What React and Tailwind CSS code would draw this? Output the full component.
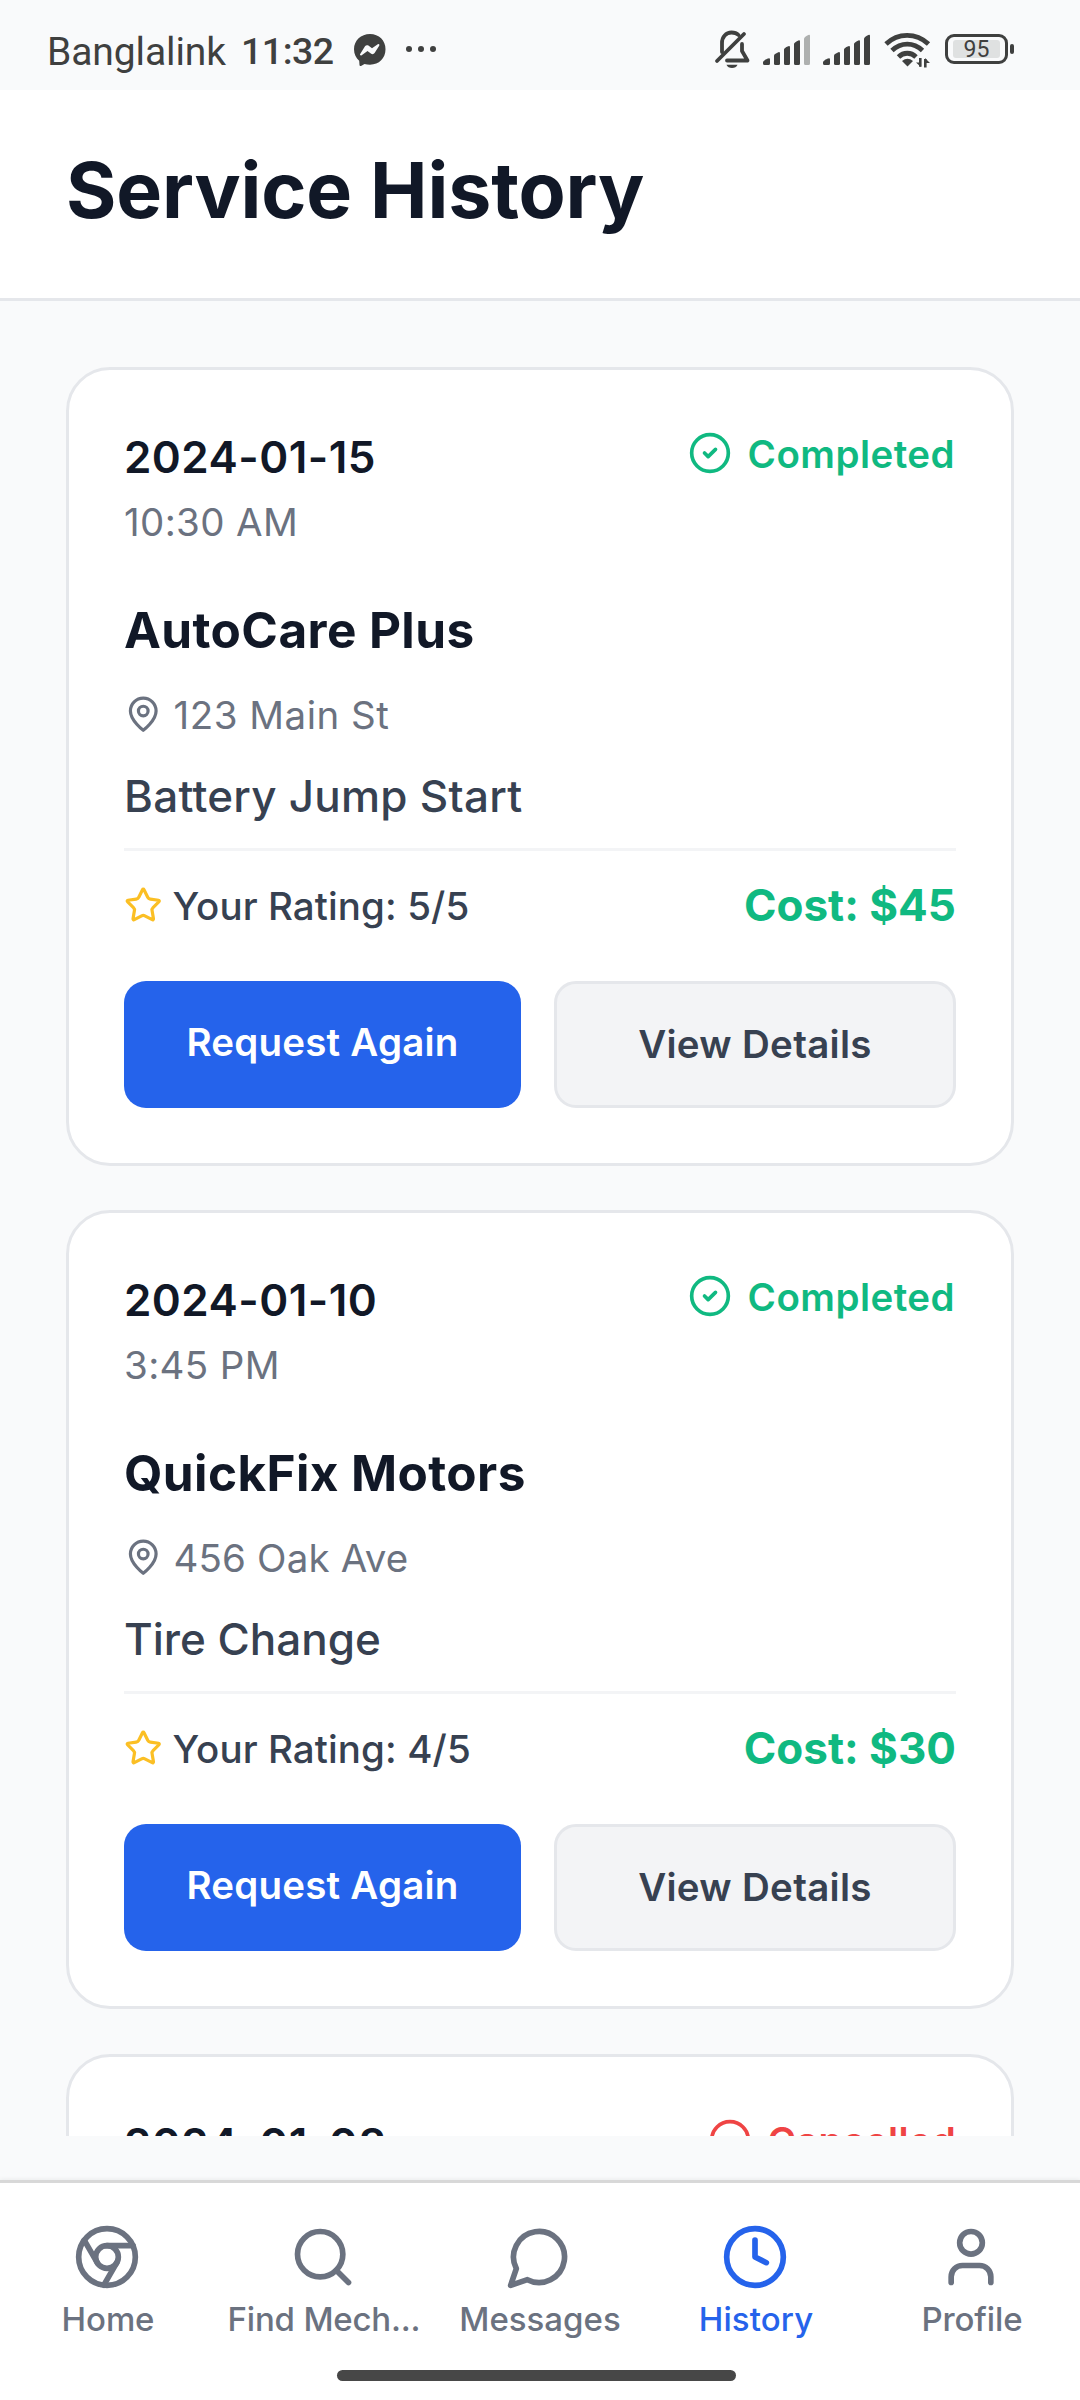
import { Search, Clock, User, Star, CircleCheck, Circle } from "lucide-react";

const services = [
  { date: "2024-01-15", time: "10:30 AM", status: "Completed", name: "AutoCare Plus", address: "123 Main St", addressClass: "tracking-[0.5px]", service: "Battery Jump Start", serviceClass: "tracking-[0.25px]", rating: "5/5", cost: "$45" },
  { date: "2024-01-10", time: "3:45 PM", status: "Completed", name: "QuickFix Motors", address: "456 Oak Ave", addressClass: "tracking-[0.15px]", service: "Tire Change", serviceClass: "tracking-normal", rating: "4/5", cost: "$30" },
  { date: "2024-01-08", status: "Cancelled" },
];

function Outline({ className, children }) {
  return (
    <svg className={className} viewBox="0 0 24 24" fill="none" stroke="currentColor" strokeWidth="2" strokeLinecap="round" strokeLinejoin="round">
      {children}
    </svg>
  );
}

function ChromeIcon({ className }) {
  return (
    <Outline className={className}>
      <circle cx="12" cy="12" r="10" />
      <circle cx="12" cy="12" r="4" />
      <path d="M21.170 8H12M3.950 6.060L8.540 14M10.880 21.940L15.460 14" />
    </Outline>
  );
}

function MessageIcon({ className }) {
  return (
    <Outline className={className}>
      <path d="M7.900 20A9 9 0 1 0 4 16.100L2 22Z" />
    </Outline>
  );
}

function PinIcon({ className }) {
  return (
    <Outline className={className}>
      <path d="M20 10c0 6-8 12-8 12s-8-6-8-12a8 8 0 0 1 16 0Z" />
      <circle cx="12" cy="10" r="3" />
    </Outline>
  );
}

const tabs = [
  { label: "Home", Icon: ChromeIcon, labelClass: "tracking-[-0.1px]" },
  { label: "Find Mech...", Icon: Search, labelClass: "tracking-[-0.2px]" },
  { label: "Messages", Icon: MessageIcon, labelClass: "tracking-normal" },
  { label: "History", Icon: Clock, labelClass: "tracking-[0.1px]", active: true },
  { label: "Profile", Icon: User, labelClass: "tracking-[-0.1px]" },
];

function Signal({ weak }) {
  return (
    <svg className="h-[32px] w-[48px] shrink-0" viewBox="0 0 48 32" fill="currentColor">
      <path d="M0 31V28.5C0 27 3 25 5 24.5Q7 23.500 7 25.5V29.5Q7 31 5.500 31H1.500Q0 31 0 29.500Z" />
      <path d="M11 21.500Q11 20 15.300 18.200Q17 17.500 17 19.500V29.500Q17 31 15.500 31H12.500Q11 31 11 29.500Z" />
      <path d="M21 15.500Q21 14 25.300 12.300Q27 11.500 27 13.500V29.500Q27 31 25.500 31H22.500Q21 31 21 29.500Z" />
      <path d="M31 10Q31 8.500 35.300 6.500Q37 5.700 37 7.500V29.500Q37 31 35.500 31H32.500Q31 31 31 29.500Z" />
      <path opacity={weak ? 0.4 : 1} d="M41 5Q41 3 45.300 1Q47 0 47 2V29.500Q47 31 45.500 31H42.500Q41 31 41 29.500Z" />
    </svg>
  );
}

function StatusBar() {
  return (
    <div className="flex h-[90px] shrink-0 items-start pl-[47px] font-['Roboto'] text-[#3f403f]">
      <span className="mt-[29px] w-[194px] text-[39px] leading-[46px] tracking-[-0.1px] whitespace-nowrap">Banglalink</span>
      <span className="mt-[28px] w-[113px] text-[37.500px] leading-[46px] font-medium tracking-[-0.5px] whitespace-nowrap">11:32</span>
      <svg className="mt-[34px] h-[32px] w-[32px]" viewBox="0 0 32 32">
        <path fill="#3f403f" d="M16 0C7 0 0 6.500 0 15.300C0 20 2 24 5.200 26.700L5.500 31C5.600 32 6.400 32.200 7 31.900L10.500 30C12.200 30.500 14 30.700 16 30.700C25 30.700 31.500 24.200 31.500 15.300S25 0 16 0Z" />
        <path fill="#f9fafb" d="M6.200 20L11 12.300C11.800 11.100 13.300 10.800 14.400 11.600L18 14.300L23.800 10.300C24.800 9.700 25.900 10.600 25.200 11.700L20.600 19C19.800 20.200 18.300 20.500 17.200 19.700L13.500 17L7.700 21.200C6.700 21.900 5.500 21 6.200 20Z" />
      </svg>
      <div className="mt-[46px] ml-[20px] flex gap-[6px]">
        <i className="size-[6px] rounded-full bg-[#3f403f]" />
        <i className="size-[6px] rounded-full bg-[#3f403f]" />
        <i className="size-[6px] rounded-full bg-[#3f403f]" />
      </div>
      <svg className="mt-[29px] ml-[278px] h-[40px] w-[38px]" viewBox="0 0 38 40" fill="none" stroke="currentColor" strokeWidth="3.800" strokeLinecap="round">
        <path d="M8 23V14C8 8 12 3.500 17.500 3.500C20.500 3.500 23 4.500 24.500 6" />
        <path d="M28 15V22L33.500 31.500H13" strokeLinejoin="round" />
        <path d="M3 32L30 5" />
        <path d="M12.500 35.800H23.500Q22 39 18 39T12.500 35.800Z" fill="currentColor" stroke="none" />
      </svg>
      <div className="mt-[34px] ml-[11px] flex gap-[12px]">
        <Signal weak />
        <Signal />
      </div>
      <svg className="mt-[32px] ml-[13px] h-[37px] w-[48px]" viewBox="0 0 48 37" fill="none" stroke="currentColor" strokeWidth="4.800">
        <path d="M2 12C14 .5 32 .5 44.500 12" />
        <path d="M8 18.500C17 10 29.500 10 38.500 18.500" />
        <path d="M14.500 25C19.500 20 27 20 32 25" />
        <path d="M18 29Q23.500 24.500 29 29L23.500 34.500Z" fill="currentColor" stroke="none" />
        <path d="M36.300 26V34.800M41.300 27V35.500" strokeWidth="2.600" />
        <path d="M32 30.500H37V35ZM46 31H41V26Z" fill="currentColor" stroke="none" />
      </svg>
      <div className="mt-[34px] ml-[13px] flex h-[30px] w-[63px] items-center justify-center rounded-[9px] border-[3px] border-[#3f403f]">
        <div className="h-[18px] w-[47px] rounded-[3px] bg-[#dfe1e1] text-center text-[23px] leading-[20px]">95</div>
      </div>
      <i className="mt-[44px] ml-[2px] h-[10px] w-[4px] rounded-[2px] bg-[#3f403f]" />
    </div>
  );
}

function ServiceDetails({ item }) {
  return (
    <>
      <h2 className="mt-[31px] text-[49.500px] leading-[60px] font-bold tracking-[0.4px] text-[#111827]">{item.name}</h2>
      <div className="mt-[31px] flex h-[48px] items-center gap-[11px] text-[#6b7280]">
        <PinIcon className="mb-[2px] size-[38.500px]" />
        <span className={`text-[38.500px] leading-[48px] ${item.addressClass}`}>{item.address}</span>
      </div>
      <div className={`mt-[30px] text-[44px] leading-[54px] font-medium text-[#374151] ${item.serviceClass}`}>{item.service}</div>
      <div className="mt-[25px] flex h-[112px] items-center justify-between border-t-[3px] border-[#f3f4f6]">
        <div className="flex items-center gap-[10px]">
          <Star className="size-[38.500px] text-[#fbbf24]" />
          <span className="text-[38.500px] leading-[48px] font-medium tracking-[0.1px] text-[#374151]">Your Rating: {item.rating}</span>
        </div>
        <span className="mb-[1px] text-[44px] leading-[54px] font-bold text-[#10b981]">Cost: {item.cost}</span>
      </div>
      <div className="mt-[21px] flex gap-[33px]">
        <button className="h-[127px] w-[397px] rounded-[22px] bg-[#2563eb] pb-[3px] text-[38.500px] font-semibold tracking-[0.2px] text-white">Request Again</button>
        <button className="h-[127px] flex-1 rounded-[22px] border-[3px] border-[#e5e7eb] bg-[#f3f4f6] text-[38.500px] font-semibold tracking-[0.3px] text-[#374151]">View Details</button>
      </div>
    </>
  );
}

function ServiceCard({ item }) {
  const completed = item.status === "Completed";
  const StatusIcon = completed ? CircleCheck : Circle;
  return (
    <article className="h-[799px] shrink-0 rounded-[44px] border-[3px] border-[#e5e7eb] bg-white px-[55px] pt-[55px] last:mt-[1px]">
      <div className="flex h-[144px] items-start justify-between">
        <div>
          <div className="mt-[5px] text-[44px] leading-[54px] font-semibold tracking-[0.45px] text-[#111827]">{item.date}</div>
          {item.time && <div className="mt-[14px] text-[38.500px] leading-[48px] tracking-[0.35px] text-[#6b7280]">{item.time}</div>}
        </div>
        <div className={completed ? "mt-[5px] flex items-start gap-[16px] text-[#10b981]" : "mt-[5px] flex items-start gap-[16px] text-[#ef4444]"}>
          <StatusIcon className="mt-[1px] size-[44px]" strokeWidth={2} />
          <span className={completed ? "pr-[1px] text-[38.500px] leading-[48px] font-semibold tracking-[0.45px]" : "text-[38.500px] leading-[48px] font-semibold tracking-[0.25px]"}>{item.status}</span>
        </div>
      </div>
      {item.name && <ServiceDetails item={item} />}
    </article>
  );
}

function TabBar() {
  return (
    <nav className="h-[220px] shrink-0 border-t-[3px] border-[#d8d8d8] bg-white shadow-[0_-1px_4px_rgba(0,0,0,0.06)]">
      <div className="flex h-[187px] pt-[40px]">
        {tabs.map(({ label, Icon, labelClass, active }) => (
          <div key={label} className={active ? "flex w-[216px] flex-col items-center text-[#2563eb]" : "flex w-[216px] flex-col items-center text-[#6b7280]"}>
            <Icon className="mr-[2px] size-[68px]" />
            <span className={`mt-[8px] text-[33px] leading-[40px] font-medium whitespace-nowrap ${labelClass}`}>{label}</span>
          </div>
        ))}
      </div>
      <div className="ml-[337px] h-[11px] w-[399px] rounded-full bg-[#474747]" />
    </nav>
  );
}

export default function App() {
  return (
    <div className="flex h-[2400px] w-[1080px] flex-col overflow-hidden bg-[#f9fafb] font-['Inter',sans-serif]">
      <StatusBar />
      <header className="h-[211px] shrink-0 border-b-[3px] border-[#e5e7eb] bg-white px-[66px] pt-[53px]">
        <h1 className="text-[77px] leading-[94px] font-bold tracking-[-0.15px] text-[#111827]">Service History</h1>
      </header>
      <main className="flex h-[1835px] shrink-0 flex-col gap-[44px] overflow-hidden px-[66px] pt-[66px]">
        {services.map((item) => (
          <ServiceCard key={item.date} item={item} />
        ))}
      </main>
      <div className="h-[44px] shrink-0" />
      <TabBar />
    </div>
  );
}
